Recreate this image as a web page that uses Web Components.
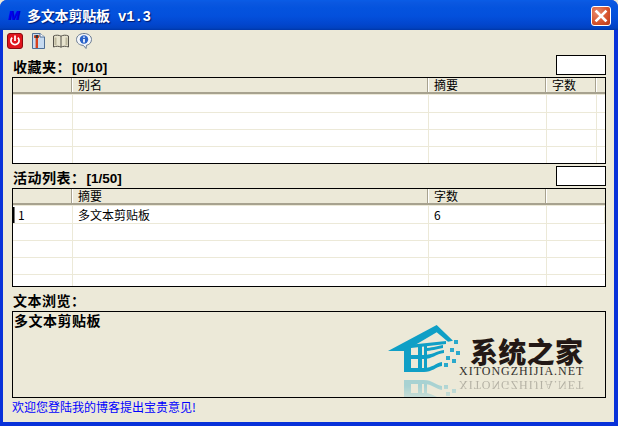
<!DOCTYPE html>
<html>
<head>
<meta charset="utf-8">
<style>
html,body{margin:0;padding:0;background:#ECE9D8}
body{width:618px;height:426px;overflow:hidden;font-family:"Liberation Sans","Noto Sans CJK SC",sans-serif;font-size:12px;color:#000}
</style>
</head>
<body>
<xp-window>
  <title-bar slot="title">多文本剪贴板 v1.3</title-bar>
  <tool-bar></tool-bar>
  <section-head>收藏夹&#xFF1A;<span>[0/10]</span></section-head>
  <list-view columns="60px 356px 118px 50px 1fr" head=",别名,摘要,字数," rows="4" height="87"></list-view>
  <section-head>活动列表&#xFF1A;<span>[1/50]</span></section-head>
  <list-view columns="60px 356px 118px 1fr" head=",摘要,字数," rows="5" height="99" first="1,多文本剪贴板,6,"></list-view>
  <preview-box label="文本浏览&#xFF1A;">多文本剪贴板</preview-box>
  <status-line>欢迎您登陆我的博客提出宝贵意见!</status-line>
</xp-window>

<script>
class XpWindow extends HTMLElement {
  constructor() {
    super()
    this.attachShadow({mode: 'open'})
    this.shadowRoot.innerHTML = `
    <style>
    :host{display:flex;flex-direction:column;width:618px;height:426px;background:#0831D9;border-radius:7px 7px 0 0;overflow:hidden;box-sizing:border-box}
    .client{flex:1;display:flex;flex-direction:column;margin:0 4px 4px 3px;padding:25px 8px 0 9px;background:#ECE9D8;position:relative;min-height:0}
    </style>
    <slot name="title"></slot>
    <div class="client"><slot></slot></div>`
  }
}

class TitleBar extends HTMLElement {
  constructor() {
    super()
    this.attachShadow({mode: 'open'})
    this.shadowRoot.innerHTML = `
    <style>
    :host{display:flex;align-items:center;height:30px;flex:none;background:linear-gradient(#0A5CE6 0,#0A57E0 3px,#0453DE 8px,#0350DC 16px,#0246CE 24px,#0142C0 28px,#0036A8 30px);color:#fff;padding-left:8px;box-sizing:border-box}
    .logo{font:italic bold 13.5px "Liberation Sans",sans-serif;color:#0000F0;width:19px;text-shadow:1px 0 0 #0000C0}
    .t{font:bold 14px "Liberation Mono","Noto Sans CJK SC",monospace;letter-spacing:-.2px;text-shadow:1px 1px 1px #00196e;flex:1;margin-top:-1px;white-space:pre}
    .x{width:20px;height:20px;margin-right:7px;margin-top:2px;box-sizing:border-box;border:1px solid #fff;border-radius:3px;background:radial-gradient(circle at 30% 30%,#E88A6C,#D6522C 60%,#B8391A)}
    svg{display:block}
    </style>
    <span class="logo">M</span>
    <span class="t"><slot></slot></span>
    <div class="x"><svg width="18" height="18" viewBox="0 0 18 18"><path d="M4.5 4.5 13.5 13.5M13.5 4.5 4.5 13.5" stroke="#fff" stroke-width="2.6" stroke-linecap="square"/></svg></div>`
  }
}

class ToolBar extends HTMLElement {
  constructor() {
    super()
    this.attachShadow({mode: 'open'})
    this.shadowRoot.innerHTML = `
    <style>
    :host{position:absolute;left:4px;top:3px;display:flex;gap:7px}
    svg{display:block;width:16px;height:16px;flex:none}
    </style>
    <svg viewBox="0 0 16 16"><rect x=".5" y=".5" width="15" height="15" rx="2.5" fill="#E0141C" stroke="#8A0A10"/><path d="M5.2 4.6A4.1 4.1 0 1 0 10.8 4.6" fill="none" stroke="#fff" stroke-width="1.7"/><path d="M8 2.6V8" stroke="#fff" stroke-width="1.7"/></svg>
    <svg viewBox="0 0 16 16"><path d="M2.5.5H10L14.5 4V15.5H2.5Z" fill="#C6DAF0" stroke="#4F6F96"/><path d="M10 .5V4H14.5" fill="#fff" stroke="#4F6F96"/><path d="M4 2.2H9.5L8.8 5H8V15H5.6V5H4Z" fill="#D8401C"/><path d="M5.6 2V5H8V2Z" fill="#333"/></svg>
    <svg viewBox="0 0 16 16"><path d="M.5 3C3 1.8 6 2 8 3.2 10 2 13 1.8 15.5 3V14C13 13 10 13 8 14.2 6 13 3 13 .5 14Z" fill="#E8E4CE" stroke="#55524A"/><path d="M8 3.2V14" stroke="#55524A"/><path d="M2.5 4.5V12M13.5 4.5V12" stroke="#BDB89E" stroke-width="2"/></svg>
    <svg viewBox="0 0 16 16"><path d="M8 .5C12 .5 15.5 2.8 15.5 6.5S12.5 12 10.5 12.2L10 15.5 7.4 12.4C3.6 12.2.5 10.2.5 6.5S4 .5 8 .5Z" fill="#F2F5FA" stroke="#6B7C92"/><circle cx="8" cy="6.5" r="4.2" fill="#2A62C8"/><path d="M8 3.4V4.8M8 6V9.6" stroke="#fff" stroke-width="1.7"/></svg>`
  }
}

class SectionHead extends HTMLElement {
  constructor() {
    super()
    this.attachShadow({mode: 'open'})
    this.shadowRoot.innerHTML = `
    <style>
    :host{display:flex;height:20px;flex:none;font:bold 14px/22px "Noto Sans CJK SC",sans-serif;letter-spacing:.5px}
    .box{margin-left:auto;width:50px;height:20px;box-sizing:border-box;border:1px solid #000;background:#fff}
    .l{flex:1;padding-left:1px;height:20px;white-space:pre}
    ::slotted(span){font:bold 13.5px "Liberation Sans",sans-serif;letter-spacing:0;margin-left:1px}
    </style>
    <div class="l"><slot></slot></div><div class="box"></div>`
  }
}

class ListView extends HTMLElement {
  constructor() {
    super()
    this.attachShadow({mode: 'open'})
  }
  connectedCallback() {
    const cols = this.getAttribute('columns')
    const head = this.getAttribute('head').split(',')
    const rows = +this.getAttribute('rows')
    const first = (this.getAttribute('first') || '').split(',')
    const cell = (txt, cls) => `<div class="${cls}">${txt || ''}</div>`
    let body = ''
    for (let r = 0; r < rows; r++) {
      body += `<div class="row">` + head.map((_, i) => cell(r == 0 ? first[i] : '', 'c')).join('') + `</div>`
    }
    this.shadowRoot.innerHTML = `
    <style>
    :host{display:flex;flex-direction:column;flex:none;height:${this.getAttribute('height')}px;box-sizing:border-box;border:1px solid #000;background:#fff;margin:2px 0;overflow:hidden;--cols:${cols};font:12px "Noto Sans CJK SC",sans-serif}
    .row,.hd{display:grid;grid-template-columns:var(--cols)}
    .hd{height:16px;flex:none;box-sizing:border-box;background:#ECE9D8;border-bottom:2px solid #A7A28F;line-height:14px}
    .h{border-right:1px solid #FFFFFF;padding-left:5px;box-sizing:border-box;height:14px;box-shadow:inset -1px 0 0 #A7A28F;position:relative}
    .h:last-child{border-right:0;box-shadow:none}
    .pale{height:1px;flex:none;background:#ECE9D8}
    .blank{height:1px;flex:none;display:grid;grid-template-columns:var(--cols)}
    .row{height:17px;flex:none;box-sizing:border-box;border-bottom:1px solid #ECE9D8;line-height:16px;position:relative}
    .c{border-right:1px solid #ECE9D8;padding-left:5px;box-sizing:border-box;white-space:nowrap;height:16px}
    .c:last-child{border-right:0}
    .mark{position:absolute;left:0;top:0;width:2px;height:16px;background:linear-gradient(90deg,#000 50%,#777 50%)}
    </style>
    <div class="hd">${head.map(h => cell(h, 'h')).join('')}</div>
    <div class="pale"></div>
    <div class="blank">${head.map(() => cell('', 'c')).join('')}</div>
    ${body}`
    if (this.getAttribute('first')) {
      const m = document.createElement('div')
      m.className = 'mark'
      this.shadowRoot.querySelector('.row').appendChild(m)
    }
  }
}

class PreviewBox extends HTMLElement {
  constructor() {
    super()
    this.attachShadow({mode: 'open'})
    this.shadowRoot.innerHTML = `
    <style>
    :host{display:block;flex:none;font:bold 14px "Noto Sans CJK SC",sans-serif;letter-spacing:.5px;margin-top:-2px}
    .label{height:24px;line-height:26px;padding-left:1px}
    .box{position:relative;height:87px;box-sizing:border-box;border:1px solid #000;padding:0 1px;line-height:17px;overflow:hidden}
    </style>
    <div class="label">${this.getAttribute('label')}</div>
    <div class="box"><slot></slot><site-logo></site-logo></div>`
  }
}

class SiteLogo extends HTMLElement {
  constructor() {
    super()
    this.attachShadow({mode: 'open'})
    const art = `<svg width="74" height="52" viewBox="0 0 74 52">
      <path d="M0 27 48.7 1 65 16.7 60 17.7 48.7 8.3 17 27Z" fill="#0F9FC6"/>
      <path d="M16 25 23 21V48H16Z" fill="#0F9FC6"/>
      <path d="M20 21 58 17V20L23 24Z" fill="#0F9FC6"/>
      <path d="M23 31H36C44 31 48 27 56 26V29C48 30 44 35 36 35H23Z" fill="#0F9FC6"/>
      <path d="M36 24C44 24 48 22 55 21V24C48 25 44 27 36 27Z" fill="#0F9FC6"/>
      <path d="M16 44H36C44 44 48 39 54 38V42C48 43 44 48 36 48H16Z" fill="#0F9FC6"/>
      <path d="M30 22H34V46H30ZM36 22H39V46H36Z" fill="#0F9FC6"/>
      <path d="M66 16h4v4h-4zM62 24h4v4h-4zM68 27h4v4h-4zM58 32h4v4h-4zM64 35h4v4h-4zM56 39h4v4h-4z" fill="#2AA9CC"/>
    </svg>`
    this.shadowRoot.innerHTML = `
    <style>
    :host{position:absolute;left:375px;top:12px;width:210px;height:74px;display:block;font-weight:normal;letter-spacing:0}
    svg{display:block}
    .art{height:52px}
    .cn{position:absolute;left:82px;top:13px;font:900 28px/28px "Noto Sans CJK SC",sans-serif;color:#231815;white-space:nowrap;letter-spacing:.3px}
    .en{position:absolute;left:71px;top:42px;font:12px/10px "Liberation Serif",serif;color:#33302c;letter-spacing:1px;white-space:nowrap}
    .mirror{position:absolute;left:0;top:52px;width:210px;height:52px;transform:scaleY(-1);opacity:.3;-webkit-mask-image:linear-gradient(to top,#000 20%,transparent 65%);mask-image:linear-gradient(to top,#000 20%,transparent 65%)}
    .mirror .en{top:38px}
    </style>
    <div class="art">${art}</div>
    <div class="cn">系统之家</div><div class="en">XITONGZHIJIA.NET</div>
    <div class="mirror" aria-hidden="true">${art}<div class="en">XITONGZHIJIA.NET</div></div>`
  }
}

class StatusLine extends HTMLElement {
  constructor() {
    super()
    this.attachShadow({mode: 'open'})
    this.shadowRoot.innerHTML = `
    <style>
    :host{display:block;flex:none;color:#0000FF;font:12px/18px "Noto Sans CJK SC",sans-serif}
    </style>
    <slot></slot>`
  }
}

customElements.define('xp-window', XpWindow)
customElements.define('title-bar', TitleBar)
customElements.define('tool-bar', ToolBar)
customElements.define('section-head', SectionHead)
customElements.define('list-view', ListView)
customElements.define('preview-box', PreviewBox)
customElements.define('site-logo', SiteLogo)
customElements.define('status-line', StatusLine)
</script>
</body>
</html>
